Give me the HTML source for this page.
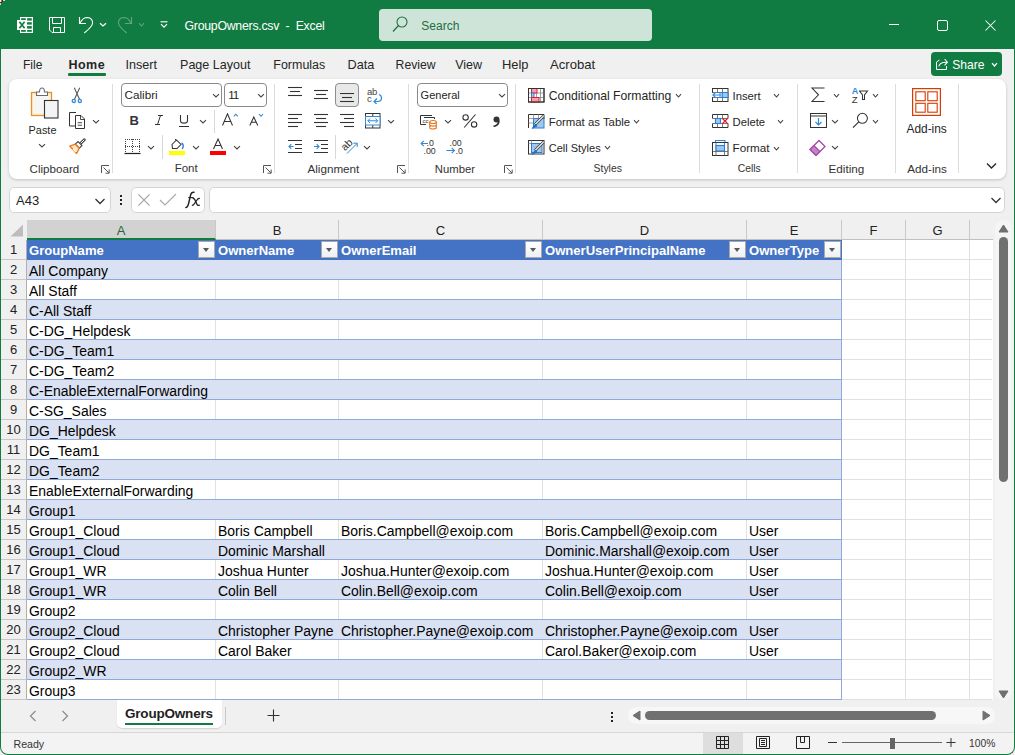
<!DOCTYPE html>
<html><head><meta charset="utf-8"><style>
*{margin:0;padding:0;box-sizing:border-box}
html,body{width:1015px;height:755px;overflow:hidden;background:#f0f0f0;font-family:"Liberation Sans",sans-serif;color:#222}
.a{position:absolute}
#title{position:absolute;left:0;top:0;width:1015px;height:49px;background:#117c41}
#title .t{position:absolute;left:184px;top:17px;font-size:12.5px;color:#fff;white-space:pre}
#search{position:absolute;left:379px;top:9px;width:273px;height:32px;background:#cde4d7;border-radius:4px}
#search span{position:absolute;left:41px;top:9px;font-size:13px;color:#1d5c39}
#tabs .tb{position:absolute;top:57px;font-size:13px;color:#222;white-space:nowrap}
#ribbon{position:absolute;left:9px;top:79px;width:996px;height:100px;background:#fff;border-radius:8px;box-shadow:0 1px 2px rgba(0,0,0,0.18)}
.gl{position:absolute;top:162px;font-size:12px;color:#333;white-space:nowrap}
.sep{position:absolute;top:86px;width:1px;height:86px;background:#e0e0e0}
.lbl{position:absolute;font-size:12px;color:#222;white-space:nowrap}
.chev{position:absolute;width:5px;height:5px;border-right:1.2px solid #444;border-bottom:1.2px solid #444;transform:rotate(45deg)}
.combo{position:absolute;height:23px;border:1px solid #8a8a8a;border-radius:4px;background:#fff}
.combo span{position:absolute;left:3px;top:4px;font-size:12.5px;color:#222}
.launch{position:absolute;width:7px;height:7px}
#grid{position:absolute;left:0;top:0;width:1015px;height:755px}
.ch{position:absolute;top:220px;height:20px;background:#f0f0f0;border-right:1px solid #c8c8c8;border-bottom:1px solid #c0c0c0;font-size:13px;text-align:center;line-height:21px;color:#222}
.ch.sel{background:#d2d2d2;color:#1e6b3a;border-bottom:2px solid #107c41}
.rh{position:absolute;left:1px;width:26px;height:20px;background:#f0f0f0;border-bottom:1px solid #c8c8c8;border-right:1px solid #b0b0b0;font-size:13px;text-align:center;line-height:20px;color:#222}
.hl{position:absolute;height:1px;background:#e1e1e1}
.vl{position:absolute;width:1px;background:#e1e1e1}
.trow{position:absolute;left:27px;width:815px;height:20px}
.trow.hdr{background:#4472c4}
.trow.band{background:#d9e1f2;border-bottom:1px solid #8ea9db}
.trow.plain{background:#fff;border-bottom:1px solid #8ea9db}
.cell{position:absolute;line-height:normal;font-size:13.95px;color:#000;white-space:nowrap}
.cell.h{color:#fff;font-weight:bold;font-size:13.07px}
.fbtn{position:absolute;width:17px;height:17px;background:linear-gradient(#ffffff,#eef0f4);border:1px solid #a9a9a9}
.fbtn i{position:absolute;left:4px;top:6px;width:0;height:0;border-left:3.5px solid transparent;border-right:3.5px solid transparent;border-top:4.5px solid #595959}
.box{position:absolute;background:#fff;border:1px solid #d4d4d4;border-radius:5px}
#frame{position:absolute;left:0;top:49px;width:1015px;height:706px;border:1px solid #117c41;border-top:none;border-radius:0 0 8px 8px;pointer-events:none}
.tri{position:absolute;width:0;height:0}

</style></head><body>
<div class="a" style="left:0;top:0;width:1015px;height:49px;background:#117c41"></div>
<svg class="a" style="left:17px;top:17px;" width="16" height="16" viewBox="0 0 16 16"><rect x="3" y="0" width="13" height="16" fill="#fff"/><g fill="#117c41"><rect x="4.1" y="1.2" width="4.7" height="1.8"/><rect x="4.1" y="13" width="4.7" height="1.8"/><rect x="10.1" y="1.2" width="4.7" height="2.4"/><rect x="10.1" y="5.2" width="4.7" height="2.4"/><rect x="10.1" y="9.1" width="4.7" height="2.5"/><rect x="10.1" y="13" width="4.7" height="1.8"/></g><rect x="0" y="3" width="9.5" height="10" fill="#fff"/><path d="M2.4 4.8 L7.6 11.2 M7.6 4.8 L2.4 11.2" stroke="#117c41" stroke-width="1.7"/></svg>
<svg class="a" style="left:49px;top:17px;" width="16" height="16" viewBox="0 0 16 16"><path d="M0.5 0.5 H15.5 V15.5 H3 L0.5 13 Z" fill="none" stroke="#fff" stroke-width="1"/><path d="M3.5 0.5 V6.5 H12.5 V0.5 M4.5 15.5 V10.5 H11.5 V15.5" fill="none" stroke="#fff" stroke-width="1"/></svg>
<svg class="a" style="left:78px;top:16px;" width="17" height="18" viewBox="0 0 17 18"><path d="M1.5 1 V7.5 H8" fill="none" stroke="#fff" stroke-width="1.1"/><path d="M2 7 C4 3 7 1.5 9.5 1.5 C13 1.7 15 4.5 14.5 7.5 C14 10.5 10 14 6.3 17" fill="none" stroke="#fff" stroke-width="1.1"/></svg>
<svg class="a" style="left:98.5px;top:22px;" width="8" height="6" viewBox="0 0 8 6"><path d="M1 1.2 L4.0 4 L7 1.2" fill="none" stroke="#fff" stroke-width="1.2"/></svg>
<svg class="a" style="left:116px;top:16px;" width="17" height="18" viewBox="0 0 17 18"><path d="M15.5 1 V7.5 H9" fill="none" stroke="#5fa77e" stroke-width="1.1"/><path d="M15 7 C13 3 10 1.5 7.5 1.5 C4 1.7 2 4.5 2.5 7.5 C3 10.5 7 14 10.7 17" fill="none" stroke="#5fa77e" stroke-width="1.1"/></svg>
<svg class="a" style="left:138px;top:22px;" width="7" height="6" viewBox="0 0 7 6"><path d="M1 1.2 L3.5 4 L6 1.2" fill="none" stroke="#5fa77e" stroke-width="1.1"/></svg>
<svg class="a" style="left:160px;top:21px;" width="8" height="8" viewBox="0 0 8 8"><path d="M0.5 0.8 H7.5" stroke="#fff" stroke-width="1.1"/><path d="M1 3.2 L4 6.2 L7 3.2" fill="none" stroke="#fff" stroke-width="1.2"/></svg>
<div class="a t" style="left:184.5px;top:19.07px;font-size:12.3px;color:#fff;letter-spacing:-0.25px">GroupOwners.csv&nbsp; -&nbsp; Excel</div>
<div class="a" style="left:379px;top:9px;width:273px;height:32px;background:#cfe4d8;border-radius:4px"></div>
<svg class="a" style="left:392px;top:16px;" width="16" height="17" viewBox="0 0 16 17"><circle cx="10" cy="6" r="5" fill="none" stroke="#1e6e41" stroke-width="1.1"/><path d="M6.5 9.5 L1 15.5" stroke="#1e6e41" stroke-width="1.2"/></svg>
<div class="a t" style="left:421.3px;top:18.74px;font-size:12px;color:#1e6e41;">Search</div>
<div class="a" style="left:889px;top:24px;width:10px;height:1px;background:#fff"></div>
<svg class="a" style="left:937px;top:20px;" width="11" height="11" viewBox="0 0 11 11"><rect x="0.5" y="0.5" width="10" height="10" rx="1.5" fill="none" stroke="#fff"/></svg>
<svg class="a" style="left:985px;top:20px;" width="11" height="11" viewBox="0 0 11 11"><path d="M0.5 0.5 L10.5 10.5 M10.5 0.5 L0.5 10.5" stroke="#fff" stroke-width="1.05"/></svg>
<div class="a t" style="left:23px;top:58.14px;font-size:12px;color:#262626;">File</div>
<div class="a t" style="left:125.4px;top:57.60px;font-size:12.6px;color:#262626;">Insert</div>
<div class="a t" style="left:180px;top:57.62px;font-size:12.57px;color:#262626;">Page Layout</div>
<div class="a t" style="left:273.3px;top:57.71px;font-size:12.48px;color:#262626;">Formulas</div>
<div class="a t" style="left:347.5px;top:57.51px;font-size:12.7px;color:#262626;">Data</div>
<div class="a t" style="left:395.6px;top:57.96px;font-size:12.2px;color:#262626;">Review</div>
<div class="a t" style="left:455.2px;top:57.69px;font-size:12.5px;color:#262626;">View</div>
<div class="a t" style="left:502px;top:57.33px;font-size:12.9px;color:#262626;">Help</div>
<div class="a t" style="left:550px;top:57.14px;font-size:13.1px;color:#262626;">Acrobat</div>
<div class="a t" style="left:68.5px;top:57.69px;font-size:12.5px;color:#262626;font-weight:bold;letter-spacing:0.45px">Home</div>
<div class="a" style="left:68px;top:73px;width:38px;height:3px;background:#117c41;border-radius:1px"></div>
<div class="a" style="left:931px;top:52px;width:71px;height:24px;background:#117c41;border-radius:4px"></div>
<svg class="a" style="left:935px;top:57px;" width="14" height="14" viewBox="0 0 14 14"><path d="M1.5 5 V12.5 H11.5 V9" fill="none" stroke="#fff" stroke-width="1"/><path d="M1.5 5 L4.5 3" stroke="#fff" stroke-width="1"/><path d="M3.8 9.5 C4.2 6.5 7 5 12 5.2 M9.6 2 L12.4 5.2 L9.6 8.4" fill="none" stroke="#fff" stroke-width="1.05"/></svg>
<div class="a t" style="left:952.2px;top:58.15px;font-size:12.1px;color:#fff;">Share</div>
<svg class="a" style="left:991px;top:62px;" width="7" height="6" viewBox="0 0 7 6"><path d="M1 1.2 L3.5 4 L6 1.2" fill="none" stroke="#fff" stroke-width="1.2"/></svg>
<div class="a" style="left:9px;top:79px;width:997px;height:100px;background:#fff;border-radius:8px;box-shadow:0 1px 3px rgba(0,0,0,0.2)"></div>
<div class="a" style="left:112px;top:84px;width:1px;height:89px;background:#dcdcdc"></div>
<div class="a" style="left:274px;top:84px;width:1px;height:89px;background:#dcdcdc"></div>
<div class="a" style="left:408px;top:84px;width:1px;height:89px;background:#dcdcdc"></div>
<div class="a" style="left:515px;top:84px;width:1px;height:89px;background:#dcdcdc"></div>
<div class="a" style="left:699px;top:84px;width:1px;height:89px;background:#dcdcdc"></div>
<div class="a" style="left:797px;top:84px;width:1px;height:89px;background:#dcdcdc"></div>
<div class="a" style="left:895px;top:84px;width:1px;height:89px;background:#dcdcdc"></div>
<div class="a" style="left:958px;top:84px;width:1px;height:89px;background:#dcdcdc"></div>
<div class="a t" style="left:29.6px;top:162.30px;font-size:11.6px;color:#333;">Clipboard</div>
<div class="a t" style="left:174.7px;top:162.39px;font-size:11.5px;color:#333;">Font</div>
<div class="a t" style="left:307.4px;top:162.21px;font-size:11.7px;color:#333;">Alignment</div>
<div class="a t" style="left:434.8px;top:162.57px;font-size:11.3px;color:#333;">Number</div>
<div class="a t" style="left:593.6px;top:163.39px;font-size:10.4px;color:#333;">Styles</div>
<div class="a t" style="left:737.8px;top:163.48px;font-size:10.3px;color:#333;">Cells</div>
<div class="a t" style="left:828.5px;top:162.21px;font-size:11.7px;color:#333;">Editing</div>
<div class="a t" style="left:907.3px;top:162.21px;font-size:11.7px;color:#333;">Add-ins</div>
<svg class="a" style="left:101px;top:165px;" width="9" height="9" viewBox="0 0 9 9"><path d="M0.5 8 V0.5 H8" fill="none" stroke="#555" stroke-width="1"/><path d="M2.5 2.5 L8 8 M4.5 8.2 H8.2 V4.5" fill="none" stroke="#555" stroke-width="1"/></svg>
<svg class="a" style="left:263px;top:165px;" width="9" height="9" viewBox="0 0 9 9"><path d="M0.5 8 V0.5 H8" fill="none" stroke="#555" stroke-width="1"/><path d="M2.5 2.5 L8 8 M4.5 8.2 H8.2 V4.5" fill="none" stroke="#555" stroke-width="1"/></svg>
<svg class="a" style="left:397px;top:165px;" width="9" height="9" viewBox="0 0 9 9"><path d="M0.5 8 V0.5 H8" fill="none" stroke="#555" stroke-width="1"/><path d="M2.5 2.5 L8 8 M4.5 8.2 H8.2 V4.5" fill="none" stroke="#555" stroke-width="1"/></svg>
<svg class="a" style="left:504px;top:165px;" width="9" height="9" viewBox="0 0 9 9"><path d="M0.5 8 V0.5 H8" fill="none" stroke="#555" stroke-width="1"/><path d="M2.5 2.5 L8 8 M4.5 8.2 H8.2 V4.5" fill="none" stroke="#555" stroke-width="1"/></svg>
<svg class="a" style="left:30px;top:87px;" width="30" height="32" viewBox="0 0 30 32"><rect x="1.5" y="5.5" width="20" height="23" fill="#fdf0d0" stroke="#e8912d" stroke-width="1.3"/><rect x="3.5" y="7.5" width="16" height="19" fill="#f6f6f6" stroke="none"/><path d="M6.5 8.5 V5 H9.5 C9.5 2.5 10.5 1 12 1 C13.5 1 14.5 2.5 14.5 5 H17.5 V8.5 Z" fill="#fff" stroke="#6b6b6b" stroke-width="1.1"/><rect x="14.5" y="13.5" width="13.5" height="17.5" fill="#f4f4f4" stroke="#333" stroke-width="1.1"/></svg>
<div class="a t" style="left:28.6px;top:123.84px;font-size:10.9px;color:#262626;">Paste</div>
<svg class="a" style="left:37.5px;top:143px;" width="8" height="6" viewBox="0 0 8 6"><path d="M1 1.2 L4.0 4 L7 1.2" fill="none" stroke="#444" stroke-width="1.1"/></svg>
<svg class="a" style="left:71px;top:87px;" width="12" height="17" viewBox="0 0 12 17"><path d="M3.3 0.8 L8.5 12.3 M8.7 0.8 L3.5 12.3" stroke="#555" stroke-width="1.05"/><circle cx="2.8" cy="13.9" r="1.6" fill="none" stroke="#2e8ad8" stroke-width="1.3"/><circle cx="8.8" cy="13.9" r="1.6" fill="none" stroke="#2e8ad8" stroke-width="1.3"/></svg>
<svg class="a" style="left:69px;top:112px;" width="17" height="18" viewBox="0 0 17 18"><path d="M7 0.5 H0.5 V14 H6" fill="none" stroke="#333" stroke-width="1"/><path d="M6.5 3.5 H12 L15.5 7 V16.5 H6.5 Z" fill="#fff" stroke="#333" stroke-width="1"/><path d="M11.5 3.5 V7.5 H15.5" fill="none" stroke="#333" stroke-width="0.9"/><path d="M8.7 10.7 H13 M8.7 13.2 H13" stroke="#333" stroke-width="0.9"/></svg>
<svg class="a" style="left:91.8px;top:119px;" width="8" height="6" viewBox="0 0 8 6"><path d="M1 1.2 L4.0 4 L7 1.2" fill="none" stroke="#444" stroke-width="1.1"/></svg>
<svg class="a" style="left:69px;top:138px;" width="17" height="17" viewBox="0 0 17 17"><path d="M15.3 1.7 L10 7" stroke="#444" stroke-width="2.8" stroke-linecap="round"/><path d="M15.3 1.7 L10 7" stroke="#fff" stroke-width="1"/><path d="M6.3 6.2 L9 3.5 L13 7.5 L10.3 10.2 Z" fill="#fff" stroke="#444" stroke-width="1.1"/><path d="M0.8 8 L6.3 6.2 L10.3 10.2 L7.5 15.5 Z" fill="#fde3c0" stroke="#e8751a" stroke-width="1.3" stroke-linejoin="round"/><path d="M4 11 L7 14" stroke="#fff" stroke-width="1.2"/></svg>
<div class="a" style="left:121px;top:83px;width:101px;height:24px;border:1px solid #8a8a8a;border-radius:4px;background:#fff"></div>
<div class="a t" style="left:124.5px;top:88.31px;font-size:11.7px;color:#262626;">Calibri</div>
<svg class="a" style="left:211.5px;top:93px;" width="8" height="6" viewBox="0 0 8 6"><path d="M1 1.2 L4.0 4 L7 1.2" fill="none" stroke="#444" stroke-width="1.1"/></svg>
<div class="a" style="left:224px;top:83px;width:43px;height:24px;border:1px solid #8a8a8a;border-radius:4px;background:#fff"></div>
<div class="a t" style="left:228.2px;top:88.31px;font-size:11.7px;color:#262626;letter-spacing:-1px">11</div>
<svg class="a" style="left:256.5px;top:93px;" width="8" height="6" viewBox="0 0 8 6"><path d="M1 1.2 L4.0 4 L7 1.2" fill="none" stroke="#444" stroke-width="1.1"/></svg>
<div class="a t" style="left:129.5px;top:113.03px;font-size:13px;color:#333;font-weight:bold;">B</div>
<svg class="a" style="left:155px;top:115px;" width="8" height="10" viewBox="0 0 8 10"><path d="M3 0.5 H8 M0 9.5 H5 M5.5 0.5 L2.5 9.5" stroke="#333" stroke-width="1"/></svg>
<svg class="a" style="left:179px;top:115px;" width="11" height="13" viewBox="0 0 11 13"><path d="M1.5 0 V5.5 C1.5 9 8.5 9 8.5 5.5 V0" fill="none" stroke="#333" stroke-width="1.1"/><path d="M0 11.5 H10" stroke="#333" stroke-width="1"/></svg>
<svg class="a" style="left:199.2px;top:118.5px;" width="8" height="6" viewBox="0 0 8 6"><path d="M1 1.2 L4.0 4 L7 1.2" fill="none" stroke="#444" stroke-width="1.1"/></svg>
<div class="a" style="left:214px;top:110px;width:1px;height:23px;background:#d8d8d8"></div>
<svg class="a" style="left:222px;top:113px;" width="17" height="13" viewBox="0 0 17 13"><path d="M0.5 12.5 L5.5 0.8 L10.5 12.5 M2.3 8.5 H8.7" fill="none" stroke="#333" stroke-width="1.05"/><path d="M11.8 3.3 L13.8 1.2 L15.8 3.3" fill="none" stroke="#2e8ad8" stroke-width="1.1"/></svg>
<svg class="a" style="left:249px;top:113px;" width="15" height="13" viewBox="0 0 15 13"><path d="M0.8 12.5 L4.8 4 L8.8 12.5 M2.3 9.3 H7.3" fill="none" stroke="#333" stroke-width="1.05"/><path d="M10 1.2 L12 3.3 L14 1.2" fill="none" stroke="#2e8ad8" stroke-width="1.1"/></svg>
<svg class="a" style="left:124px;top:138px;" width="17" height="17" viewBox="0 0 17 17"><path d="M1 1.5 H16 M1 8.5 H16 M1.5 1 V15 M8.5 1 V15 M15.5 1 V15" fill="none" stroke="#444" stroke-width="1" stroke-dasharray="1 1"/><path d="M0.5 15.5 H16.5" stroke="#222" stroke-width="1.2"/></svg>
<svg class="a" style="left:147.4px;top:144.8px;" width="8" height="6" viewBox="0 0 8 6"><path d="M1 1.2 L4.0 4 L7 1.2" fill="none" stroke="#444" stroke-width="1.1"/></svg>
<div class="a" style="left:162px;top:135px;width:1px;height:24px;background:#d8d8d8"></div>
<svg class="a" style="left:169px;top:138px;" width="17" height="18" viewBox="0 0 17 18"><path d="M3 6.5 L7.5 2 L12 6.5 L8 10.5 L3.5 10.5 Z" fill="#fff" stroke="#333" stroke-width="1.05"/><path d="M6 1 L8 3.2" stroke="#333" stroke-width="1"/><path d="M13.3 11 C14.8 8 14.5 6 12.5 5" fill="none" stroke="#2e8ad8" stroke-width="1.5"/><rect x="0" y="13" width="16" height="4" fill="#ffff00"/></svg>
<svg class="a" style="left:191.8px;top:144.8px;" width="8" height="6" viewBox="0 0 8 6"><path d="M1 1.2 L4.0 4 L7 1.2" fill="none" stroke="#444" stroke-width="1.1"/></svg>
<svg class="a" style="left:210px;top:138px;" width="17" height="18" viewBox="0 0 17 18"><path d="M3.5 11 L8 1 L12.5 11 M5.2 7.5 H10.8" fill="none" stroke="#333" stroke-width="1.05"/><rect x="0" y="13" width="16" height="4" fill="#ff0000"/></svg>
<svg class="a" style="left:233px;top:144.8px;" width="8" height="6" viewBox="0 0 8 6"><path d="M1 1.2 L4.0 4 L7 1.2" fill="none" stroke="#444" stroke-width="1.1"/></svg>
<svg class="a" style="left:288px;top:86px;" width="15" height="11" viewBox="0 0 15 11"><path d="M0 1.5 H14" stroke="#333" stroke-width="1.1"/><path d="M2 5.5 H12" stroke="#333" stroke-width="1.1"/><path d="M0 9.5 H14" stroke="#333" stroke-width="1.1"/></svg>
<svg class="a" style="left:314px;top:89px;" width="15" height="11" viewBox="0 0 15 11"><path d="M0 1.5 H14" stroke="#333" stroke-width="1.1"/><path d="M2 5.5 H12" stroke="#333" stroke-width="1.1"/><path d="M0 9.5 H14" stroke="#333" stroke-width="1.1"/></svg>
<div class="a" style="left:335px;top:83px;width:24px;height:24px;border:1px solid #8d8d8d;border-radius:4px;background:#e8e8e8"></div>
<svg class="a" style="left:340px;top:93px;" width="15" height="11" viewBox="0 0 15 11"><path d="M0 0.5 H14" stroke="#333" stroke-width="1.1"/><path d="M2 4.5 H12" stroke="#333" stroke-width="1.1"/><path d="M0 8.5 H14" stroke="#333" stroke-width="1.1"/></svg>
<div class="a t" style="left:367px;top:86.00px;font-size:9.5px;color:#444;letter-spacing:-0.3px">ab</div>
<div class="a t" style="left:367px;top:93.20px;font-size:9.5px;color:#444;">c</div>
<svg class="a" style="left:372px;top:93px;" width="11" height="11" viewBox="0 0 11 11"><path d="M7 1.5 C10.5 3 10.5 8.5 6 8.5 H2.5" fill="none" stroke="#2e8ad8" stroke-width="1.2"/><path d="M5 5.5 L2 8.5 L5 11.5" fill="none" stroke="#2e8ad8" stroke-width="1.2"/></svg>
<svg class="a" style="left:288px;top:113px;" width="15" height="15" viewBox="0 0 15 15"><path d="M0 1.5 H14" stroke="#333" stroke-width="1.1"/><path d="M0 5.5 H10" stroke="#333" stroke-width="1.1"/><path d="M0 9.5 H14" stroke="#333" stroke-width="1.1"/><path d="M0 13.5 H10" stroke="#333" stroke-width="1.1"/></svg>
<svg class="a" style="left:314px;top:113px;" width="15" height="15" viewBox="0 0 15 15"><path d="M0 1.5 H14" stroke="#333" stroke-width="1.1"/><path d="M2 5.5 H12" stroke="#333" stroke-width="1.1"/><path d="M0 9.5 H14" stroke="#333" stroke-width="1.1"/><path d="M2 13.5 H12" stroke="#333" stroke-width="1.1"/></svg>
<svg class="a" style="left:340px;top:113px;" width="15" height="15" viewBox="0 0 15 15"><path d="M0 1.5 H14" stroke="#333" stroke-width="1.1"/><path d="M4 5.5 H14" stroke="#333" stroke-width="1.1"/><path d="M0 9.5 H14" stroke="#333" stroke-width="1.1"/><path d="M4 13.5 H14" stroke="#333" stroke-width="1.1"/></svg>
<svg class="a" style="left:365px;top:113px;" width="16" height="16" viewBox="0 0 16 16"><rect x="0.5" y="0.5" width="14.5" height="14.5" fill="none" stroke="#333" stroke-width="1"/><path d="M7.75 0.5 V3.5 M7.75 12 V15" stroke="#333"/><rect x="0.5" y="3.5" width="14.5" height="8.5" fill="#fff" stroke="#2e8ad8" stroke-width="1"/><path d="M3 7.75 H12.5 M5 5.5 L2.8 7.75 L5 10 M10.5 5.5 L12.7 7.75 L10.5 10" fill="none" stroke="#2e8ad8" stroke-width="1"/></svg>
<svg class="a" style="left:387.4px;top:119px;" width="8" height="6" viewBox="0 0 8 6"><path d="M1 1.2 L4.0 4 L7 1.2" fill="none" stroke="#444" stroke-width="1.1"/></svg>
<svg class="a" style="left:288px;top:139px;" width="15" height="15" viewBox="0 0 15 15"><path d="M0 1.5 H14 M7 5.5 H14 M7 9.5 H14 M0 13.5 H14" stroke="#333" stroke-width="1.1"/><path d="M0.8 7.5 H5.5 M3.3 5.2 L1 7.5 L3.3 9.8" fill="none" stroke="#2e8ad8" stroke-width="1.1"/></svg>
<svg class="a" style="left:314px;top:139px;" width="15" height="15" viewBox="0 0 15 15"><path d="M0 1.5 H14 M7 5.5 H14 M7 9.5 H14 M0 13.5 H14" stroke="#333" stroke-width="1.1"/><path d="M0 7.5 H5 M2.7 5.2 L5 7.5 L2.7 9.8" fill="none" stroke="#2e8ad8" stroke-width="1.1"/></svg>
<div class="a" style="left:335px;top:135px;width:1px;height:24px;background:#d8d8d8"></div>
<svg class="a" style="left:341px;top:137px;" width="18" height="18" viewBox="0 0 18 18"><text x="0" y="11.5" font-family="Liberation Sans" font-size="10.5" fill="#333" transform="rotate(-45 5.5 8)">ab</text><path d="M6 16.5 L16 6.5 M12.3 6.2 H16.2 V10" fill="none" stroke="#2e8ad8" stroke-width="1"/></svg>
<svg class="a" style="left:362.7px;top:145px;" width="8" height="6" viewBox="0 0 8 6"><path d="M1 1.2 L4.0 4 L7 1.2" fill="none" stroke="#444" stroke-width="1.1"/></svg>
<div class="a" style="left:417px;top:83px;width:91px;height:24px;border:1px solid #8a8a8a;border-radius:4px;background:#fff"></div>
<div class="a t" style="left:420.6px;top:88.84px;font-size:11px;color:#262626;">General</div>
<svg class="a" style="left:497.8px;top:93px;" width="8" height="6" viewBox="0 0 8 6"><path d="M1 1.2 L4.0 4 L7 1.2" fill="none" stroke="#444" stroke-width="1.1"/></svg>
<svg class="a" style="left:420px;top:115px;" width="18" height="15" viewBox="0 0 18 15"><path d="M12 0.5 H0.5 V9.5 H6" fill="none" stroke="#333" stroke-width="1"/><path d="M4 2.5 H14.5 V4" fill="none" stroke="#333"/><text x="2.5" y="8" font-family="Liberation Sans" font-size="6" fill="#333">cc</text><ellipse cx="13" cy="7" rx="3.3" ry="1.5" fill="#fff" stroke="#e8751a" stroke-width="1.1"/><path d="M9.7 7 V12.5 C9.7 14.5 16.3 14.5 16.3 12.5 V7 M9.7 9.8 C9.7 11.5 16.3 11.5 16.3 9.8" fill="none" stroke="#e8751a" stroke-width="1.1"/></svg>
<svg class="a" style="left:443.7px;top:118.7px;" width="8" height="6" viewBox="0 0 8 6"><path d="M1 1.2 L4.0 4 L7 1.2" fill="none" stroke="#444" stroke-width="1.1"/></svg>
<svg class="a" style="left:462px;top:114px;" width="16" height="14" viewBox="0 0 16 14"><circle cx="3.6" cy="3.4" r="2.7" fill="none" stroke="#333" stroke-width="1.1"/><circle cx="12.1" cy="10.4" r="2.7" fill="none" stroke="#333" stroke-width="1.1"/><path d="M13.5 0.5 L2.2 13.5" stroke="#333" stroke-width="1.1"/></svg>
<svg class="a" style="left:492px;top:116px;" width="9" height="11" viewBox="0 0 9 11"><circle cx="4.5" cy="3.5" r="3" fill="#333"/><path d="M6.8 4.5 C7 7.5 5 9.5 1.5 10.5" fill="none" stroke="#333" stroke-width="1.8"/></svg>
<svg class="a" style="left:420px;top:139px;" width="10" height="9" viewBox="0 0 10 9"><path d="M1 4.5 H8 M3.8 1.8 L1.1 4.5 L3.8 7.2" fill="none" stroke="#2e8ad8" stroke-width="1.1"/></svg>
<div class="a t" style="left:426.5px;top:137.84px;font-size:8.8px;color:#333;">.0</div>
<div class="a t" style="left:423.5px;top:145.64px;font-size:8.8px;color:#333;">.00</div>
<div class="a t" style="left:449.5px;top:137.84px;font-size:8.8px;color:#333;">.00</div>
<svg class="a" style="left:446px;top:146px;" width="11" height="9" viewBox="0 0 11 9"><path d="M0.5 4.5 H8.5 M5.7 1.8 L8.4 4.5 L5.7 7.2" fill="none" stroke="#2e8ad8" stroke-width="1.1"/></svg>
<div class="a t" style="left:455.5px;top:145.64px;font-size:8.8px;color:#333;">.0</div>
<svg class="a" style="left:528px;top:88px;" width="17" height="15" viewBox="0 0 17 15"><rect x="0.5" y="0.5" width="15.5" height="13.5" fill="#fff" stroke="#333" stroke-width="1"/><path d="M3.5 0.5 V14 M8.5 0.5 V14 M12.5 0.5 V14 M0.5 5 H16 M0.5 9.5 H16" stroke="#888" stroke-width="0.8"/><rect x="3.5" y="0.5" width="5.5" height="4.5" fill="#f4a0a8" stroke="#e02030" stroke-width="1"/><rect x="3.5" y="5" width="2.5" height="4.5" fill="#9fc8ee" stroke="#2e7dd0" stroke-width="1"/><rect x="3.5" y="9.5" width="7.5" height="4.5" fill="#f4a0a8" stroke="#e02030" stroke-width="1"/><rect x="0.5" y="0.5" width="15.5" height="13.5" fill="none" stroke="#333" stroke-width="1"/></svg>
<div class="a t" style="left:548.7px;top:89.16px;font-size:12.2px;color:#262626;">Conditional Formatting</div>
<svg class="a" style="left:674.6px;top:93px;" width="7" height="6" viewBox="0 0 7 6"><path d="M1 1.2 L3.5 4 L6 1.2" fill="none" stroke="#444" stroke-width="1.1"/></svg>
<svg class="a" style="left:528px;top:114px;" width="17" height="15" viewBox="0 0 17 15"><path d="M0.5 14 V0.5 H16 V5" fill="none" stroke="#333" stroke-width="1"/><path d="M5.5 0.5 V4.5 M10.5 0.5 V4.5 M0.5 4.5 H16 M0.5 9 H5" stroke="#888" stroke-width="0.8"/><rect x="5.5" y="4.5" width="10.5" height="9.5" fill="#9fc8ee" stroke="#2e7dd0" stroke-width="1"/><path d="M15.5 2 L7 10.5" stroke="#444" stroke-width="2.8"/><path d="M15.5 2 L7 10.5" stroke="#f2f2f2" stroke-width="1.1"/><path d="M7.5 10 L4 14.5 L9 12 Z" fill="#1f6fc4" stroke="#1f6fc4" stroke-width="0.8"/></svg>
<div class="a t" style="left:548.7px;top:115.58px;font-size:11.4px;color:#262626;">Format as Table</div>
<svg class="a" style="left:633.4px;top:119px;" width="7" height="6" viewBox="0 0 7 6"><path d="M1 1.2 L3.5 4 L6 1.2" fill="none" stroke="#444" stroke-width="1.1"/></svg>
<svg class="a" style="left:528px;top:140px;" width="17" height="15" viewBox="0 0 17 15"><rect x="0.5" y="0.5" width="15.5" height="13.5" fill="#fff" stroke="#333" stroke-width="1"/><path d="M0.5 3.5 H16 M3.5 0.5 V14" stroke="#888" stroke-width="0.8"/><rect x="3.5" y="3.5" width="10.5" height="9" fill="#9fc8ee" stroke="#2e7dd0" stroke-width="1"/><path d="M15.5 2 L7 10.5" stroke="#444" stroke-width="2.8"/><path d="M15.5 2 L7 10.5" stroke="#f2f2f2" stroke-width="1.1"/><path d="M7.5 10 L4 14.5 L9 12 Z" fill="#1f6fc4" stroke="#1f6fc4" stroke-width="0.8"/></svg>
<div class="a t" style="left:548.7px;top:142.04px;font-size:11.0px;color:#262626;">Cell Styles</div>
<svg class="a" style="left:604.4px;top:145px;" width="7" height="6" viewBox="0 0 7 6"><path d="M1 1.2 L3.5 4 L6 1.2" fill="none" stroke="#444" stroke-width="1.1"/></svg>
<svg class="a" style="left:712px;top:88px;" width="17" height="15" viewBox="0 0 17 15"><rect x="0.5" y="0.5" width="15.5" height="13" fill="#fff" stroke="#333" stroke-width="1"/><path d="M5.5 0.5 V14 M10.5 0.5 V14 M0.5 4.5 H16 M0.5 9.5 H16" stroke="#555" stroke-width="0.8"/><rect x="5.5" y="4.5" width="10.5" height="5" fill="#9fc8ee" stroke="#2e7dd0" stroke-width="1"/><path d="M10.5 4.5 V9.5" stroke="#2e7dd0" stroke-width="0.8"/><rect x="0" y="5" width="7" height="4" fill="#fff"/><path d="M9 7 H1 M3.8 4.2 L1 7 L3.8 9.8" fill="none" stroke="#2e8ad8" stroke-width="1.2"/></svg>
<div class="a t" style="left:732.5px;top:89.87px;font-size:11.3px;color:#262626;">Insert</div>
<svg class="a" style="left:772.9px;top:93.4px;" width="7" height="6" viewBox="0 0 7 6"><path d="M1 1.2 L3.5 4 L6 1.2" fill="none" stroke="#444" stroke-width="1.1"/></svg>
<svg class="a" style="left:712px;top:114px;" width="17" height="15" viewBox="0 0 17 15"><path d="M0.5 4.5 V0.5 H16 V4.5 M0.5 9.5 V13.5 H16 V9.5" fill="none" stroke="#333" stroke-width="1"/><path d="M5.5 0.5 V4.5 M10.5 0.5 V4.5 M5.5 9.5 V13.5 M10.5 9.5 V13.5 M0.5 4.5 H16 M0.5 9.5 H16" stroke="#555" stroke-width="0.8"/><rect x="3.5" y="4.5" width="5" height="5" fill="#9fc8ee" stroke="#2e7dd0" stroke-width="1.1"/><path d="M10.5 4.5 L15.5 9.5 M15.5 4.5 L10.5 9.5" stroke="#e81123" stroke-width="1.1"/></svg>
<div class="a t" style="left:732.5px;top:115.77px;font-size:11.3px;color:#262626;">Delete</div>
<svg class="a" style="left:776.8px;top:119.4px;" width="7" height="6" viewBox="0 0 7 6"><path d="M1 1.2 L3.5 4 L6 1.2" fill="none" stroke="#444" stroke-width="1.1"/></svg>
<svg class="a" style="left:712px;top:140px;" width="17" height="16" viewBox="0 0 17 16"><rect x="0.5" y="2.5" width="15.5" height="13" fill="#fff" stroke="#333" stroke-width="1"/><path d="M4 2.5 V15.5 M12.5 2.5 V15.5 M0.5 11.5 H16" stroke="#555" stroke-width="0.8"/><rect x="4" y="5.5" width="8.5" height="5.5" fill="#9fc8ee" stroke="#2e7dd0" stroke-width="1.1"/><path d="M3.5 0.5 H13 M3.5 -1 V2 M13 -1 V2" stroke="#2e8ad8" stroke-width="1.1"/></svg>
<div class="a t" style="left:732.5px;top:141.41px;font-size:11.7px;color:#262626;">Format</div>
<svg class="a" style="left:772.9px;top:145.6px;" width="7" height="6" viewBox="0 0 7 6"><path d="M1 1.2 L3.5 4 L6 1.2" fill="none" stroke="#444" stroke-width="1.1"/></svg>
<svg class="a" style="left:811px;top:87px;" width="15" height="16" viewBox="0 0 15 16"><path d="M13.5 1 H1 L7.5 7.8 L1 14.5 H13.5" fill="none" stroke="#333" stroke-width="1.05"/></svg>
<svg class="a" style="left:832.6px;top:93.4px;" width="7" height="6" viewBox="0 0 7 6"><path d="M1 1.2 L3.5 4 L6 1.2" fill="none" stroke="#444" stroke-width="1.1"/></svg>
<div class="a t" style="left:851.8px;top:85.66px;font-size:9px;color:#2e8ad8;font-weight:bold;">A</div>
<div class="a t" style="left:851.8px;top:93.91px;font-size:9.6px;color:#333;">Z</div>
<svg class="a" style="left:859px;top:90px;" width="10" height="11" viewBox="0 0 10 11"><path d="M0.5 1 H8.5 L5.5 5 V9.5 H3.5 V5 Z" fill="none" stroke="#333" stroke-width="1.05"/></svg>
<svg class="a" style="left:872.4px;top:93.4px;" width="7" height="6" viewBox="0 0 7 6"><path d="M1 1.2 L3.5 4 L6 1.2" fill="none" stroke="#444" stroke-width="1.1"/></svg>
<svg class="a" style="left:810px;top:113px;" width="17" height="15" viewBox="0 0 17 15"><rect x="0.5" y="0.5" width="16" height="14" fill="#fff" stroke="#333" stroke-width="1"/><path d="M0.5 3 H16.5" stroke="#333"/><path d="M8.5 5 V12 M5.5 9 L8.5 12 L11.5 9" fill="none" stroke="#2e8ad8" stroke-width="1.2"/></svg>
<svg class="a" style="left:830.6px;top:119.4px;" width="8" height="6" viewBox="0 0 8 6"><path d="M1 1.2 L4.0 4 L7 1.2" fill="none" stroke="#444" stroke-width="1.1"/></svg>
<svg class="a" style="left:852px;top:112px;" width="17" height="17" viewBox="0 0 17 17"><circle cx="10.4" cy="6.3" r="5" fill="none" stroke="#333" stroke-width="1.05"/><path d="M6.8 9.9 L1 15.7" stroke="#333" stroke-width="1.2"/></svg>
<svg class="a" style="left:872.4px;top:119.4px;" width="7" height="6" viewBox="0 0 7 6"><path d="M1 1.2 L3.5 4 L6 1.2" fill="none" stroke="#444" stroke-width="1.1"/></svg>
<svg class="a" style="left:809px;top:139px;" width="17" height="17" viewBox="0 0 17 17"><path d="M1 10.5 L10 1.5 L16 7.5 L7 16.5 Z" fill="#fff" stroke="#a349a4" stroke-width="1.3"/><path d="M1 10.5 L5 6.5 L11 12.5 L7 16.5 Z" fill="#c583c7" stroke="#a349a4" stroke-width="1.1"/></svg>
<svg class="a" style="left:830.6px;top:145px;" width="8" height="6" viewBox="0 0 8 6"><path d="M1 1.2 L4.0 4 L7 1.2" fill="none" stroke="#444" stroke-width="1.1"/></svg>
<svg class="a" style="left:912px;top:88px;" width="30" height="28" viewBox="0 0 30 28"><rect x="0.6" y="0.6" width="27.8" height="26.8" fill="none" stroke="#d83b01" stroke-width="1.2"/><rect x="3.8" y="3.8" width="9.4" height="8.9" fill="none" stroke="#d83b01" stroke-width="1.1"/><rect x="15.8" y="3.8" width="9.4" height="8.9" fill="none" stroke="#d83b01" stroke-width="1.1"/><rect x="3.8" y="15.3" width="9.4" height="8.9" fill="none" stroke="#d83b01" stroke-width="1.1"/><rect x="15.8" y="15.3" width="9.4" height="8.9" fill="none" stroke="#d83b01" stroke-width="1.1"/></svg>
<div class="a t" style="left:906.5px;top:121.83px;font-size:11.9px;color:#262626;">Add-ins</div>
<svg class="a" style="left:986px;top:162px;" width="12" height="8" viewBox="0 0 12 8"><path d="M1 1.5 L5.5 6 L10 1.5" fill="none" stroke="#222" stroke-width="1.3"/></svg>
<div id="grid">
<div class="a" style="left:27px;top:240px;width:966px;height:460px;background:#fff"></div>
<div class="ch sel" style="left:27px;width:189px">A</div>
<div class="ch" style="left:216px;width:123px">B</div>
<div class="ch" style="left:339px;width:204px">C</div>
<div class="ch" style="left:543px;width:204px">D</div>
<div class="ch" style="left:747px;width:95px">E</div>
<div class="ch" style="left:842px;width:64px">F</div>
<div class="ch" style="left:906px;width:64px">G</div>
<div class="ch" style="left:970px;width:23px;border-right:none"></div>
<div class="rh" style="top:240px">1</div>
<div class="rh" style="top:260px">2</div>
<div class="rh" style="top:280px">3</div>
<div class="rh" style="top:300px">4</div>
<div class="rh" style="top:320px">5</div>
<div class="rh" style="top:340px">6</div>
<div class="rh" style="top:360px">7</div>
<div class="rh" style="top:380px">8</div>
<div class="rh" style="top:400px">9</div>
<div class="rh" style="top:420px">10</div>
<div class="rh" style="top:440px">11</div>
<div class="rh" style="top:460px">12</div>
<div class="rh" style="top:480px">13</div>
<div class="rh" style="top:500px">14</div>
<div class="rh" style="top:520px">15</div>
<div class="rh" style="top:540px">16</div>
<div class="rh" style="top:560px">17</div>
<div class="rh" style="top:580px">18</div>
<div class="rh" style="top:600px">19</div>
<div class="rh" style="top:620px">20</div>
<div class="rh" style="top:640px">21</div>
<div class="rh" style="top:660px">22</div>
<div class="rh" style="top:680px">23</div>
<div class="hl" style="top:259px;left:842px;width:150px"></div>
<div class="hl" style="top:279px;left:842px;width:150px"></div>
<div class="hl" style="top:299px;left:842px;width:150px"></div>
<div class="hl" style="top:319px;left:842px;width:150px"></div>
<div class="hl" style="top:339px;left:842px;width:150px"></div>
<div class="hl" style="top:359px;left:842px;width:150px"></div>
<div class="hl" style="top:379px;left:842px;width:150px"></div>
<div class="hl" style="top:399px;left:842px;width:150px"></div>
<div class="hl" style="top:419px;left:842px;width:150px"></div>
<div class="hl" style="top:439px;left:842px;width:150px"></div>
<div class="hl" style="top:459px;left:842px;width:150px"></div>
<div class="hl" style="top:479px;left:842px;width:150px"></div>
<div class="hl" style="top:499px;left:842px;width:150px"></div>
<div class="hl" style="top:519px;left:842px;width:150px"></div>
<div class="hl" style="top:539px;left:842px;width:150px"></div>
<div class="hl" style="top:559px;left:842px;width:150px"></div>
<div class="hl" style="top:579px;left:842px;width:150px"></div>
<div class="hl" style="top:599px;left:842px;width:150px"></div>
<div class="hl" style="top:619px;left:842px;width:150px"></div>
<div class="hl" style="top:639px;left:842px;width:150px"></div>
<div class="hl" style="top:659px;left:842px;width:150px"></div>
<div class="hl" style="top:679px;left:842px;width:150px"></div>
<div class="hl" style="top:699px;left:842px;width:150px"></div>
<div class="vl" style="left:841px;top:240px;height:460px"></div>
<div class="vl" style="left:905px;top:240px;height:460px"></div>
<div class="vl" style="left:969px;top:240px;height:460px"></div>
<div class="trow hdr" style="top:240px"></div>
<div class="cell h" style="left:29px;top:243.17px">GroupName</div>
<div class="cell h" style="left:218px;top:243.17px">OwnerName</div>
<div class="cell h" style="left:341px;top:243.17px">OwnerEmail</div>
<div class="cell h" style="left:545px;top:243.17px">OwnerUserPrincipalName</div>
<div class="cell h" style="left:749px;top:243.17px">OwnerType</div>
<div class="fbtn" style="left:198px;top:241px"><i></i></div>
<div class="fbtn" style="left:321px;top:241px"><i></i></div>
<div class="fbtn" style="left:525px;top:241px"><i></i></div>
<div class="fbtn" style="left:729px;top:241px"><i></i></div>
<div class="fbtn" style="left:824px;top:241px"><i></i></div>
<div class="trow band" style="top:260px"></div>
<div class="cell" style="left:29px;top:262.88px">All Company</div>
<div class="trow plain" style="top:280px"></div>
<div class="vl" style="left:215px;top:280px;height:19px"></div>
<div class="vl" style="left:338px;top:280px;height:19px"></div>
<div class="vl" style="left:542px;top:280px;height:19px"></div>
<div class="vl" style="left:746px;top:280px;height:19px"></div>
<div class="cell" style="left:29px;top:282.88px">All Staff</div>
<div class="trow band" style="top:300px"></div>
<div class="cell" style="left:29px;top:302.88px">C-All Staff</div>
<div class="trow plain" style="top:320px"></div>
<div class="vl" style="left:215px;top:320px;height:19px"></div>
<div class="vl" style="left:338px;top:320px;height:19px"></div>
<div class="vl" style="left:542px;top:320px;height:19px"></div>
<div class="vl" style="left:746px;top:320px;height:19px"></div>
<div class="cell" style="left:29px;top:322.88px">C-DG_Helpdesk</div>
<div class="trow band" style="top:340px"></div>
<div class="cell" style="left:29px;top:342.88px">C-DG_Team1</div>
<div class="trow plain" style="top:360px"></div>
<div class="vl" style="left:215px;top:360px;height:19px"></div>
<div class="vl" style="left:338px;top:360px;height:19px"></div>
<div class="vl" style="left:542px;top:360px;height:19px"></div>
<div class="vl" style="left:746px;top:360px;height:19px"></div>
<div class="cell" style="left:29px;top:362.88px">C-DG_Team2</div>
<div class="trow band" style="top:380px"></div>
<div class="cell" style="left:29px;top:382.88px">C-EnableExternalForwarding</div>
<div class="trow plain" style="top:400px"></div>
<div class="vl" style="left:215px;top:400px;height:19px"></div>
<div class="vl" style="left:338px;top:400px;height:19px"></div>
<div class="vl" style="left:542px;top:400px;height:19px"></div>
<div class="vl" style="left:746px;top:400px;height:19px"></div>
<div class="cell" style="left:29px;top:402.88px">C-SG_Sales</div>
<div class="trow band" style="top:420px"></div>
<div class="cell" style="left:29px;top:422.88px">DG_Helpdesk</div>
<div class="trow plain" style="top:440px"></div>
<div class="vl" style="left:215px;top:440px;height:19px"></div>
<div class="vl" style="left:338px;top:440px;height:19px"></div>
<div class="vl" style="left:542px;top:440px;height:19px"></div>
<div class="vl" style="left:746px;top:440px;height:19px"></div>
<div class="cell" style="left:29px;top:442.88px">DG_Team1</div>
<div class="trow band" style="top:460px"></div>
<div class="cell" style="left:29px;top:462.88px">DG_Team2</div>
<div class="trow plain" style="top:480px"></div>
<div class="vl" style="left:215px;top:480px;height:19px"></div>
<div class="vl" style="left:338px;top:480px;height:19px"></div>
<div class="vl" style="left:542px;top:480px;height:19px"></div>
<div class="vl" style="left:746px;top:480px;height:19px"></div>
<div class="cell" style="left:29px;top:482.88px">EnableExternalForwarding</div>
<div class="trow band" style="top:500px"></div>
<div class="cell" style="left:29px;top:502.88px">Group1</div>
<div class="trow plain" style="top:520px"></div>
<div class="vl" style="left:215px;top:520px;height:19px"></div>
<div class="vl" style="left:338px;top:520px;height:19px"></div>
<div class="vl" style="left:542px;top:520px;height:19px"></div>
<div class="vl" style="left:746px;top:520px;height:19px"></div>
<div class="cell" style="left:29px;top:522.88px">Group1_Cloud</div>
<div class="cell" style="left:218px;top:522.88px">Boris Campbell</div>
<div class="cell" style="left:341px;top:522.88px">Boris.Campbell@exoip.com</div>
<div class="cell" style="left:545px;top:522.88px">Boris.Campbell@exoip.com</div>
<div class="cell" style="left:749px;top:522.88px">User</div>
<div class="trow band" style="top:540px"></div>
<div class="cell" style="left:29px;top:542.88px">Group1_Cloud</div>
<div class="cell" style="left:218px;top:542.88px">Dominic Marshall</div>
<div class="cell" style="left:545px;top:542.88px">Dominic.Marshall@exoip.com</div>
<div class="cell" style="left:749px;top:542.88px">User</div>
<div class="trow plain" style="top:560px"></div>
<div class="vl" style="left:215px;top:560px;height:19px"></div>
<div class="vl" style="left:338px;top:560px;height:19px"></div>
<div class="vl" style="left:542px;top:560px;height:19px"></div>
<div class="vl" style="left:746px;top:560px;height:19px"></div>
<div class="cell" style="left:29px;top:562.88px">Group1_WR</div>
<div class="cell" style="left:218px;top:562.88px">Joshua Hunter</div>
<div class="cell" style="left:341px;top:562.88px">Joshua.Hunter@exoip.com</div>
<div class="cell" style="left:545px;top:562.88px">Joshua.Hunter@exoip.com</div>
<div class="cell" style="left:749px;top:562.88px">User</div>
<div class="trow band" style="top:580px"></div>
<div class="cell" style="left:29px;top:582.88px">Group1_WR</div>
<div class="cell" style="left:218px;top:582.88px">Colin Bell</div>
<div class="cell" style="left:341px;top:582.88px">Colin.Bell@exoip.com</div>
<div class="cell" style="left:545px;top:582.88px">Colin.Bell@exoip.com</div>
<div class="cell" style="left:749px;top:582.88px">User</div>
<div class="trow plain" style="top:600px"></div>
<div class="vl" style="left:215px;top:600px;height:19px"></div>
<div class="vl" style="left:338px;top:600px;height:19px"></div>
<div class="vl" style="left:542px;top:600px;height:19px"></div>
<div class="vl" style="left:746px;top:600px;height:19px"></div>
<div class="cell" style="left:29px;top:602.88px">Group2</div>
<div class="trow band" style="top:620px"></div>
<div class="cell" style="left:29px;top:622.88px">Group2_Cloud</div>
<div class="cell" style="left:218px;top:622.88px">Christopher Payne</div>
<div class="cell" style="left:341px;top:622.88px">Christopher.Payne@exoip.com</div>
<div class="cell" style="left:545px;top:622.88px">Christopher.Payne@exoip.com</div>
<div class="cell" style="left:749px;top:622.88px">User</div>
<div class="trow plain" style="top:640px"></div>
<div class="vl" style="left:215px;top:640px;height:19px"></div>
<div class="vl" style="left:338px;top:640px;height:19px"></div>
<div class="vl" style="left:542px;top:640px;height:19px"></div>
<div class="vl" style="left:746px;top:640px;height:19px"></div>
<div class="cell" style="left:29px;top:642.88px">Group2_Cloud</div>
<div class="cell" style="left:218px;top:642.88px">Carol Baker</div>
<div class="cell" style="left:545px;top:642.88px">Carol.Baker@exoip.com</div>
<div class="cell" style="left:749px;top:642.88px">User</div>
<div class="trow band" style="top:660px"></div>
<div class="cell" style="left:29px;top:662.88px">Group2_WR</div>
<div class="trow plain" style="top:680px"></div>
<div class="vl" style="left:215px;top:680px;height:19px"></div>
<div class="vl" style="left:338px;top:680px;height:19px"></div>
<div class="vl" style="left:542px;top:680px;height:19px"></div>
<div class="vl" style="left:746px;top:680px;height:19px"></div>
<div class="cell" style="left:29px;top:682.88px">Group3</div>
<div class="a" style="left:841px;top:260px;width:1px;height:440px;background:#8ea9db"></div>
</div>
<!-- formula bar -->
<div class="box" style="left:9px;top:187px;width:102px;height:26px"></div>
<div class="a" style="left:16px;top:193px;font-size:13px;color:#222">A43</div>
<svg class="a" style="left:94px;top:197px" width="12" height="9"><path d="M1.5 2 L6 6.5 L10.5 2" fill="none" stroke="#333" stroke-width="1.3"/></svg>
<svg class="a" style="left:119px;top:194px" width="4" height="12"><rect x="1" y="1" width="2" height="2" fill="#222"/><rect x="1" y="5" width="2" height="2" fill="#222"/><rect x="1" y="9" width="2" height="2" fill="#222"/></svg>
<div class="box" style="left:131px;top:187px;width:74px;height:26px"></div>
<svg class="a" style="left:137px;top:193px" width="14" height="14"><path d="M1.5 1.5 L12.5 12.5 M12.5 1.5 L1.5 12.5" stroke="#a8a8a8" stroke-width="1.1"/></svg>
<svg class="a" style="left:159px;top:193px" width="18" height="13"><path d="M1 7 L6 12 L17 1" fill="none" stroke="#a8a8a8" stroke-width="1.1"/></svg>
<svg class="a" style="left:184px;top:191px" width="17" height="18"><path d="M1.2 16.6 C2.8 16.8 3.9 15.5 4.6 12.5 L6.6 4 C7.3 1.5 8.4 0.9 10.6 1.4" fill="none" stroke="#222" stroke-width="1.4"/><path d="M4.3 6.6 H9.6" stroke="#222" stroke-width="1.1"/><path d="M8.6 7.4 C10.1 7 10.8 8 11.7 10.4 L12.9 13.2 C13.4 14.4 14.1 14.7 15.8 14.1" fill="none" stroke="#222" stroke-width="1.3"/><path d="M15.8 7.6 C14.8 7.1 13.9 7.6 12.6 9.5 L10.1 13 C9.5 14 8.9 14.6 7.9 14.2" fill="none" stroke="#222" stroke-width="1.3"/></svg>
<div class="box" style="left:209px;top:187px;width:796px;height:26px"></div>
<svg class="a" style="left:990px;top:196px" width="12" height="9"><path d="M1.5 2 L6 6.5 L10.5 2" fill="none" stroke="#333" stroke-width="1.3"/></svg>

<!-- vertical scrollbar -->
<div class="a" style="left:993px;top:220px;width:21px;height:480px;background:#f0f0f0"></div>
<div class="a" style="left:995px;top:220px;width:17px;height:480px;background:#f5f5f5;border-radius:8px"></div>
<svg class="a" style="left:998px;top:224px" width="11" height="9"><path d="M5.5 1 L10 8 L1 8 Z" fill="#707070" stroke="#707070" stroke-width="1" stroke-linejoin="round"/></svg>
<div class="a" style="left:999px;top:237px;width:9px;height:245px;background:#707070;border-radius:5px"></div>
<svg class="a" style="left:998px;top:690px" width="11" height="9"><path d="M1 1 L10 1 L5.5 8 Z" fill="#707070" stroke="#707070" stroke-width="1" stroke-linejoin="round"/></svg>

<!-- sheet tabs bar -->
<div class="a" style="left:1px;top:700px;width:1013px;height:32px;background:#f0f0f0"></div>
<svg class="a" style="left:28px;top:710px" width="10" height="12"><path d="M7.5 1 L2.5 6 L7.5 11" fill="none" stroke="#8a8a8a" stroke-width="1.2"/></svg>
<svg class="a" style="left:60px;top:710px" width="10" height="12"><path d="M2.5 1 L7.5 6 L2.5 11" fill="none" stroke="#8a8a8a" stroke-width="1.2"/></svg>
<div class="a" style="left:117px;top:700px;width:105px;height:28px;background:#fff;border-radius:0 0 5px 5px;box-shadow:0 1px 1px rgba(0,0,0,0.12)"></div>
<div class="a" style="left:125px;top:706px;font-size:13.5px;font-weight:bold;color:#222;letter-spacing:-0.2px">GroupOwners</div>
<div class="a" style="left:125px;top:723px;width:88px;height:2px;background:#107c41"></div>
<div class="a" style="left:225px;top:707px;width:1px;height:18px;background:#c8c8c8"></div>
<svg class="a" style="left:267px;top:709px" width="13" height="13"><path d="M6.5 0.5 V12.5 M0.5 6.5 H12.5" stroke="#333" stroke-width="1.1"/></svg>
<svg class="a" style="left:610px;top:711px" width="4" height="12"><rect x="1" y="1" width="2" height="2" fill="#222"/><rect x="1" y="5" width="2" height="2" fill="#222"/><rect x="1" y="9" width="2" height="2" fill="#222"/></svg>
<div class="a" style="left:628px;top:707px;width:367px;height:17px;background:#f7f7f7;border-radius:8px"></div>
<svg class="a" style="left:632px;top:710px" width="9" height="11"><path d="M8 1 L1 5.5 L8 10 Z" fill="#707070" stroke="#707070" stroke-linejoin="round"/></svg>
<div class="a" style="left:645px;top:711px;width:291px;height:9px;background:#707070;border-radius:5px"></div>
<svg class="a" style="left:982px;top:710px" width="9" height="11"><path d="M1 1 L8 5.5 L1 10 Z" fill="#707070" stroke="#707070" stroke-linejoin="round"/></svg>

<!-- status bar -->
<div class="a" style="left:1px;top:732px;width:1013px;height:22px;background:#f3f3f3;border-top:1px solid #d6d6d6"></div>
<div class="a" style="left:13.5px;top:737.5px;font-size:10.6px;color:#333">Ready</div>
<div class="a" style="left:703px;top:733px;width:40px;height:21px;background:#dedede"></div>
<svg class="a" style="left:715px;top:735px" width="15" height="15"><path d="M1.5 1.5 H13.5 V13.5 H1.5 Z M1.5 5.5 H13.5 M1.5 9.5 H13.5 M5.5 1.5 V13.5 M9.5 1.5 V13.5" fill="none" stroke="#222" stroke-width="1"/></svg>
<svg class="a" style="left:755px;top:735px" width="16" height="15"><path d="M1.5 1.5 H14.5 V13.5 H1.5 Z M4.5 3.5 H11.5 V11.5 H4.5 Z M6 5.5 H10 M6 7.5 H10 M6 9.5 H10" fill="none" stroke="#222" stroke-width="1"/></svg>
<svg class="a" style="left:795px;top:735px" width="16" height="15"><path d="M1.5 1.5 H14.5 V13.5 H1.5 Z M5.5 1.5 V7.5 H9.5 V1.5" fill="none" stroke="#222" stroke-width="1"/></svg>
<div class="a" style="left:828px;top:742px;width:9px;height:1px;background:#333"></div>
<div class="a" style="left:842px;top:742px;width:100px;height:1px;background:#666"></div>
<div class="a" style="left:890px;top:738px;width:5px;height:11px;background:#666"></div>
<svg class="a" style="left:946px;top:737px" width="10" height="11"><path d="M5 1 V10 M0.5 5.5 H9.5" stroke="#333" stroke-width="1"/></svg>
<div class="a" style="left:969px;top:737.5px;font-size:10.3px;color:#333">100%</div>
<svg class="a" style="left:10px;top:224px" width="14" height="13"><path d="M13 0.5 V12.5 H0.5 Z" fill="#bdbdbd"/></svg>
<svg class="a" style="left:0;top:0" width="5" height="6"><rect x="0" y="0" width="1" height="2" fill="#f4f0e0"/><rect x="1" y="0" width="1" height="2" fill="#b06a30"/><rect x="0" y="2" width="2" height="1" fill="#303030"/><rect x="2" y="0" width="1" height="2" fill="#303040"/><rect x="3" y="0" width="2" height="1" fill="#b8e0f0"/><rect x="0" y="3" width="1" height="2" fill="#c8d8cc"/></svg>
<div id="frame"></div>

</body></html>
